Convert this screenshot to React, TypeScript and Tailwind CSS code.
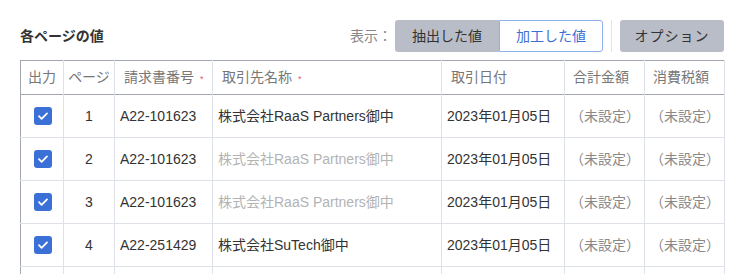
const rows = [
  { n: 1, no: "A22-101623", name: "株式会社RaaS Partners御中", dim: false },
  { n: 2, no: "A22-101623", name: "株式会社RaaS Partners御中", dim: true },
  { n: 3, no: "A22-101623", name: "株式会社RaaS Partners御中", dim: true },
  { n: 4, no: "A22-251429", name: "株式会社SuTech御中", dim: false },
];

function Check() {
  return (
    <span className="inline-flex h-[18px] w-[18px] items-center justify-center rounded-[3px] bg-[#3b70d6]">
      <svg width="12" height="12" viewBox="0 0 12 12" fill="none">
        <path d="M2 6.2l2.6 2.6L10 3.4" stroke="white" strokeWidth="1.8" strokeLinecap="round" strokeLinejoin="round" />
      </svg>
    </span>
  );
}

function Req() {
  return <span className="ml-[6px] inline-block text-[9px] text-[#e05a6a]">*</span>;
}

export default function App() {
  const font = { fontFamily: '"Liberation Sans", "Noto Sans CJK JP", sans-serif' };
  const th = "h-[34px] whitespace-nowrap border-r border-[#dfe1e8] px-[9px] pr-0 text-left text-[14px] font-normal text-[#777]";
  const td = "h-[43px] whitespace-nowrap border-r border-b border-[#dfe1e8] px-[5px] text-[14px] text-[#333]";
  return (
    <div className="h-[274px] w-[744px] overflow-hidden bg-white" style={font}>
      <div className="mt-[20px] flex h-[32px] items-center justify-between px-[20px]">
        <div className="text-[14px] font-bold text-[#333]">各ページの値</div>
        <div className="flex h-full items-center">
          <span className="mr-[3px] text-[14px] text-[#888]">表示：</span>
          <button className="h-full w-[104px] rounded-l-[3px] bg-[#b9bdc7] text-[14px] text-[#333]">抽出した値</button>
          <button className="h-full w-[104px] rounded-r-[3px] border border-[#8eb0ec] bg-white text-[14px] text-[#3b70d6]">加工した値</button>
          <div className="mx-[8px] h-full w-px bg-[#e2e4ea]" />
          <button className="h-full w-[104px] rounded-[3px] bg-[#b9bdc7] text-[14px] tracking-[1px] text-[#333]">オプション</button>
        </div>
      </div>
      <div className="ml-[20px] mt-[8px] w-[704px]">
        <table className="w-[704px] table-fixed border-collapse border border-[#a3a7b0]">
          <colgroup>
            <col className="w-[43px]" />
            <col className="w-[51px]" />
            <col className="w-[98px]" />
            <col className="w-[229px]" />
            <col className="w-[123px]" />
            <col className="w-[80px]" />
            <col className="w-[80px]" />
          </colgroup>
          <thead>
            <tr className="border-b border-[#a3a7b0]">
              <th className={th + " !px-0 !text-center"}>出力</th>
              <th className={th + " !px-0 !text-center"}>ページ</th>
              <th className={th}>請求書番号<Req /></th>
              <th className={th}>取引先名称<Req /></th>
              <th className={th}>取引日付</th>
              <th className={th + " !pl-[8px]"}>合計金額</th>
              <th className={th + " !pl-[8px]"}>消費税額</th>
            </tr>
          </thead>
          <tbody>
            {rows.map((r) => (
              <tr key={r.n}>
                <td className={td + " text-center"}>
                  <div className="flex items-center justify-center pl-[1px]"><Check /></div>
                </td>
                <td className={td + " text-center"}>{r.n}</td>
                <td className={td}>{r.no}</td>
                <td className={td + (r.dim ? " !text-[#b3b3b3]" : "")}>{r.name}</td>
                <td className={td}>2023年01月05日</td>
                <td className={td + " !text-[#888]"}>（未設定）</td>
                <td className={td + " !text-[#888]"}>（未設定）</td>
              </tr>
            ))}
            <tr>
              <td className={td} />
              <td className={td} />
              <td className={td} />
              <td className={td} />
              <td className={td} />
              <td className={td} />
              <td className={td} />
            </tr>
          </tbody>
        </table>
      </div>
    </div>
  );
}
